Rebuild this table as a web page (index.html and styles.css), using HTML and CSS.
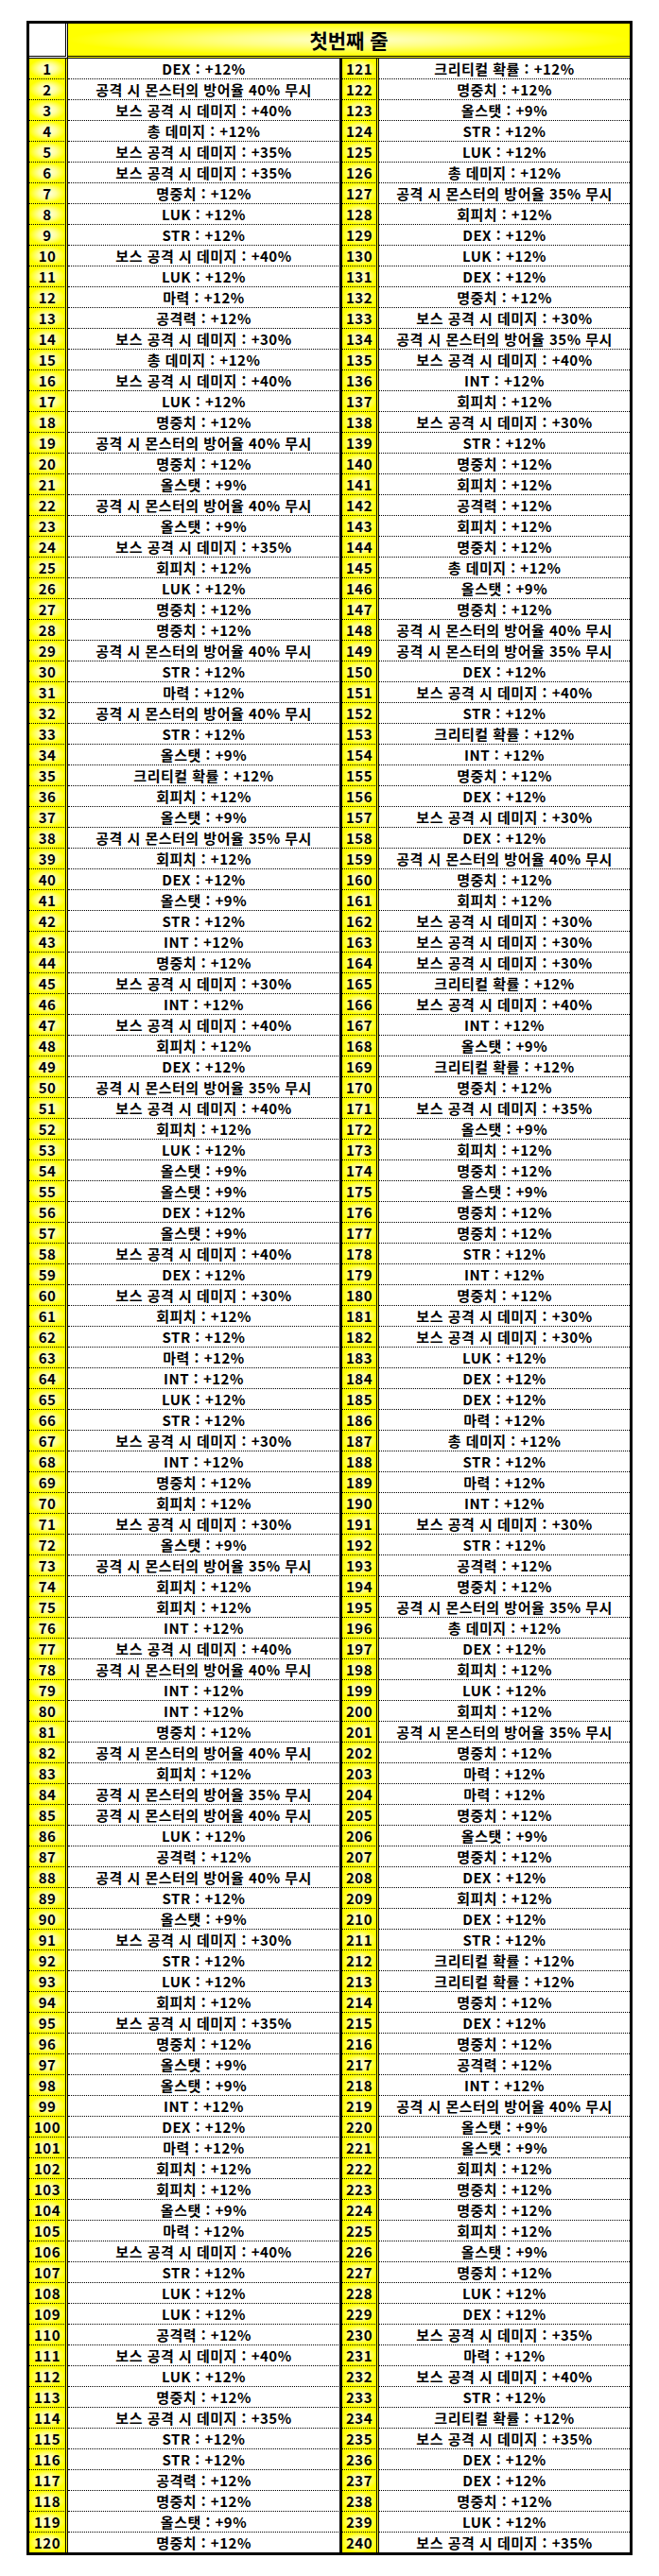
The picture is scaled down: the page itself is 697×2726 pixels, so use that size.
FILE: index.html
```html
<!DOCTYPE html>
<html lang="ko">
<head>
<meta charset="utf-8">
<title>첫번째 줄</title>
<link rel="stylesheet" href="styles.css">
</head>
<body>
<div class="page">
<div class="sheet">
<div class="head"><div class="corner"></div><div class="title">첫번째 줄</div></div>
<div class="row"><span class="n">1</span><span class="t">DEX : +12%</span><span class="n n2">121</span><span class="t t2">크리티컬 확률 : +12%</span></div>
<div class="row"><span class="n">2</span><span class="t">공격 시 몬스터의 방어율 40% 무시</span><span class="n n2">122</span><span class="t t2">명중치 : +12%</span></div>
<div class="row"><span class="n">3</span><span class="t">보스 공격 시 데미지 : +40%</span><span class="n n2">123</span><span class="t t2">올스탯 : +9%</span></div>
<div class="row"><span class="n">4</span><span class="t">총 데미지 : +12%</span><span class="n n2">124</span><span class="t t2">STR : +12%</span></div>
<div class="row"><span class="n">5</span><span class="t">보스 공격 시 데미지 : +35%</span><span class="n n2">125</span><span class="t t2">LUK : +12%</span></div>
<div class="row"><span class="n">6</span><span class="t">보스 공격 시 데미지 : +35%</span><span class="n n2">126</span><span class="t t2">총 데미지 : +12%</span></div>
<div class="row"><span class="n">7</span><span class="t">명중치 : +12%</span><span class="n n2">127</span><span class="t t2">공격 시 몬스터의 방어율 35% 무시</span></div>
<div class="row"><span class="n">8</span><span class="t">LUK : +12%</span><span class="n n2">128</span><span class="t t2">회피치 : +12%</span></div>
<div class="row"><span class="n">9</span><span class="t">STR : +12%</span><span class="n n2">129</span><span class="t t2">DEX : +12%</span></div>
<div class="row"><span class="n">10</span><span class="t">보스 공격 시 데미지 : +40%</span><span class="n n2">130</span><span class="t t2">LUK : +12%</span></div>
<div class="row"><span class="n">11</span><span class="t">LUK : +12%</span><span class="n n2">131</span><span class="t t2">DEX : +12%</span></div>
<div class="row"><span class="n">12</span><span class="t">마력 : +12%</span><span class="n n2">132</span><span class="t t2">명중치 : +12%</span></div>
<div class="row"><span class="n">13</span><span class="t">공격력 : +12%</span><span class="n n2">133</span><span class="t t2">보스 공격 시 데미지 : +30%</span></div>
<div class="row"><span class="n">14</span><span class="t">보스 공격 시 데미지 : +30%</span><span class="n n2">134</span><span class="t t2">공격 시 몬스터의 방어율 35% 무시</span></div>
<div class="row"><span class="n">15</span><span class="t">총 데미지 : +12%</span><span class="n n2">135</span><span class="t t2">보스 공격 시 데미지 : +40%</span></div>
<div class="row"><span class="n">16</span><span class="t">보스 공격 시 데미지 : +40%</span><span class="n n2">136</span><span class="t t2">INT : +12%</span></div>
<div class="row"><span class="n">17</span><span class="t">LUK : +12%</span><span class="n n2">137</span><span class="t t2">회피치 : +12%</span></div>
<div class="row"><span class="n">18</span><span class="t">명중치 : +12%</span><span class="n n2">138</span><span class="t t2">보스 공격 시 데미지 : +30%</span></div>
<div class="row"><span class="n">19</span><span class="t">공격 시 몬스터의 방어율 40% 무시</span><span class="n n2">139</span><span class="t t2">STR : +12%</span></div>
<div class="row"><span class="n">20</span><span class="t">명중치 : +12%</span><span class="n n2">140</span><span class="t t2">명중치 : +12%</span></div>
<div class="row"><span class="n">21</span><span class="t">올스탯 : +9%</span><span class="n n2">141</span><span class="t t2">회피치 : +12%</span></div>
<div class="row"><span class="n">22</span><span class="t">공격 시 몬스터의 방어율 40% 무시</span><span class="n n2">142</span><span class="t t2">공격력 : +12%</span></div>
<div class="row"><span class="n">23</span><span class="t">올스탯 : +9%</span><span class="n n2">143</span><span class="t t2">회피치 : +12%</span></div>
<div class="row"><span class="n">24</span><span class="t">보스 공격 시 데미지 : +35%</span><span class="n n2">144</span><span class="t t2">명중치 : +12%</span></div>
<div class="row"><span class="n">25</span><span class="t">회피치 : +12%</span><span class="n n2">145</span><span class="t t2">총 데미지 : +12%</span></div>
<div class="row"><span class="n">26</span><span class="t">LUK : +12%</span><span class="n n2">146</span><span class="t t2">올스탯 : +9%</span></div>
<div class="row"><span class="n">27</span><span class="t">명중치 : +12%</span><span class="n n2">147</span><span class="t t2">명중치 : +12%</span></div>
<div class="row"><span class="n">28</span><span class="t">명중치 : +12%</span><span class="n n2">148</span><span class="t t2">공격 시 몬스터의 방어율 40% 무시</span></div>
<div class="row"><span class="n">29</span><span class="t">공격 시 몬스터의 방어율 40% 무시</span><span class="n n2">149</span><span class="t t2">공격 시 몬스터의 방어율 35% 무시</span></div>
<div class="row"><span class="n">30</span><span class="t">STR : +12%</span><span class="n n2">150</span><span class="t t2">DEX : +12%</span></div>
<div class="row"><span class="n">31</span><span class="t">마력 : +12%</span><span class="n n2">151</span><span class="t t2">보스 공격 시 데미지 : +40%</span></div>
<div class="row"><span class="n">32</span><span class="t">공격 시 몬스터의 방어율 40% 무시</span><span class="n n2">152</span><span class="t t2">STR : +12%</span></div>
<div class="row"><span class="n">33</span><span class="t">STR : +12%</span><span class="n n2">153</span><span class="t t2">크리티컬 확률 : +12%</span></div>
<div class="row"><span class="n">34</span><span class="t">올스탯 : +9%</span><span class="n n2">154</span><span class="t t2">INT : +12%</span></div>
<div class="row"><span class="n">35</span><span class="t">크리티컬 확률 : +12%</span><span class="n n2">155</span><span class="t t2">명중치 : +12%</span></div>
<div class="row"><span class="n">36</span><span class="t">회피치 : +12%</span><span class="n n2">156</span><span class="t t2">DEX : +12%</span></div>
<div class="row"><span class="n">37</span><span class="t">올스탯 : +9%</span><span class="n n2">157</span><span class="t t2">보스 공격 시 데미지 : +30%</span></div>
<div class="row"><span class="n">38</span><span class="t">공격 시 몬스터의 방어율 35% 무시</span><span class="n n2">158</span><span class="t t2">DEX : +12%</span></div>
<div class="row"><span class="n">39</span><span class="t">회피치 : +12%</span><span class="n n2">159</span><span class="t t2">공격 시 몬스터의 방어율 40% 무시</span></div>
<div class="row"><span class="n">40</span><span class="t">DEX : +12%</span><span class="n n2">160</span><span class="t t2">명중치 : +12%</span></div>
<div class="row"><span class="n">41</span><span class="t">올스탯 : +9%</span><span class="n n2">161</span><span class="t t2">회피치 : +12%</span></div>
<div class="row"><span class="n">42</span><span class="t">STR : +12%</span><span class="n n2">162</span><span class="t t2">보스 공격 시 데미지 : +30%</span></div>
<div class="row"><span class="n">43</span><span class="t">INT : +12%</span><span class="n n2">163</span><span class="t t2">보스 공격 시 데미지 : +30%</span></div>
<div class="row"><span class="n">44</span><span class="t">명중치 : +12%</span><span class="n n2">164</span><span class="t t2">보스 공격 시 데미지 : +30%</span></div>
<div class="row"><span class="n">45</span><span class="t">보스 공격 시 데미지 : +30%</span><span class="n n2">165</span><span class="t t2">크리티컬 확률 : +12%</span></div>
<div class="row"><span class="n">46</span><span class="t">INT : +12%</span><span class="n n2">166</span><span class="t t2">보스 공격 시 데미지 : +40%</span></div>
<div class="row"><span class="n">47</span><span class="t">보스 공격 시 데미지 : +40%</span><span class="n n2">167</span><span class="t t2">INT : +12%</span></div>
<div class="row"><span class="n">48</span><span class="t">회피치 : +12%</span><span class="n n2">168</span><span class="t t2">올스탯 : +9%</span></div>
<div class="row"><span class="n">49</span><span class="t">DEX : +12%</span><span class="n n2">169</span><span class="t t2">크리티컬 확률 : +12%</span></div>
<div class="row"><span class="n">50</span><span class="t">공격 시 몬스터의 방어율 35% 무시</span><span class="n n2">170</span><span class="t t2">명중치 : +12%</span></div>
<div class="row"><span class="n">51</span><span class="t">보스 공격 시 데미지 : +40%</span><span class="n n2">171</span><span class="t t2">보스 공격 시 데미지 : +35%</span></div>
<div class="row"><span class="n">52</span><span class="t">회피치 : +12%</span><span class="n n2">172</span><span class="t t2">올스탯 : +9%</span></div>
<div class="row"><span class="n">53</span><span class="t">LUK : +12%</span><span class="n n2">173</span><span class="t t2">회피치 : +12%</span></div>
<div class="row"><span class="n">54</span><span class="t">올스탯 : +9%</span><span class="n n2">174</span><span class="t t2">명중치 : +12%</span></div>
<div class="row"><span class="n">55</span><span class="t">올스탯 : +9%</span><span class="n n2">175</span><span class="t t2">올스탯 : +9%</span></div>
<div class="row"><span class="n">56</span><span class="t">DEX : +12%</span><span class="n n2">176</span><span class="t t2">명중치 : +12%</span></div>
<div class="row"><span class="n">57</span><span class="t">올스탯 : +9%</span><span class="n n2">177</span><span class="t t2">명중치 : +12%</span></div>
<div class="row"><span class="n">58</span><span class="t">보스 공격 시 데미지 : +40%</span><span class="n n2">178</span><span class="t t2">STR : +12%</span></div>
<div class="row"><span class="n">59</span><span class="t">DEX : +12%</span><span class="n n2">179</span><span class="t t2">INT : +12%</span></div>
<div class="row"><span class="n">60</span><span class="t">보스 공격 시 데미지 : +30%</span><span class="n n2">180</span><span class="t t2">명중치 : +12%</span></div>
<div class="row"><span class="n">61</span><span class="t">회피치 : +12%</span><span class="n n2">181</span><span class="t t2">보스 공격 시 데미지 : +30%</span></div>
<div class="row"><span class="n">62</span><span class="t">STR : +12%</span><span class="n n2">182</span><span class="t t2">보스 공격 시 데미지 : +30%</span></div>
<div class="row"><span class="n">63</span><span class="t">마력 : +12%</span><span class="n n2">183</span><span class="t t2">LUK : +12%</span></div>
<div class="row"><span class="n">64</span><span class="t">INT : +12%</span><span class="n n2">184</span><span class="t t2">DEX : +12%</span></div>
<div class="row"><span class="n">65</span><span class="t">LUK : +12%</span><span class="n n2">185</span><span class="t t2">DEX : +12%</span></div>
<div class="row"><span class="n">66</span><span class="t">STR : +12%</span><span class="n n2">186</span><span class="t t2">마력 : +12%</span></div>
<div class="row"><span class="n">67</span><span class="t">보스 공격 시 데미지 : +30%</span><span class="n n2">187</span><span class="t t2">총 데미지 : +12%</span></div>
<div class="row"><span class="n">68</span><span class="t">INT : +12%</span><span class="n n2">188</span><span class="t t2">STR : +12%</span></div>
<div class="row"><span class="n">69</span><span class="t">명중치 : +12%</span><span class="n n2">189</span><span class="t t2">마력 : +12%</span></div>
<div class="row"><span class="n">70</span><span class="t">회피치 : +12%</span><span class="n n2">190</span><span class="t t2">INT : +12%</span></div>
<div class="row"><span class="n">71</span><span class="t">보스 공격 시 데미지 : +30%</span><span class="n n2">191</span><span class="t t2">보스 공격 시 데미지 : +30%</span></div>
<div class="row"><span class="n">72</span><span class="t">올스탯 : +9%</span><span class="n n2">192</span><span class="t t2">STR : +12%</span></div>
<div class="row"><span class="n">73</span><span class="t">공격 시 몬스터의 방어율 35% 무시</span><span class="n n2">193</span><span class="t t2">공격력 : +12%</span></div>
<div class="row"><span class="n">74</span><span class="t">회피치 : +12%</span><span class="n n2">194</span><span class="t t2">명중치 : +12%</span></div>
<div class="row"><span class="n">75</span><span class="t">회피치 : +12%</span><span class="n n2">195</span><span class="t t2">공격 시 몬스터의 방어율 35% 무시</span></div>
<div class="row"><span class="n">76</span><span class="t">INT : +12%</span><span class="n n2">196</span><span class="t t2">총 데미지 : +12%</span></div>
<div class="row"><span class="n">77</span><span class="t">보스 공격 시 데미지 : +40%</span><span class="n n2">197</span><span class="t t2">DEX : +12%</span></div>
<div class="row"><span class="n">78</span><span class="t">공격 시 몬스터의 방어율 40% 무시</span><span class="n n2">198</span><span class="t t2">회피치 : +12%</span></div>
<div class="row"><span class="n">79</span><span class="t">INT : +12%</span><span class="n n2">199</span><span class="t t2">LUK : +12%</span></div>
<div class="row"><span class="n">80</span><span class="t">INT : +12%</span><span class="n n2">200</span><span class="t t2">회피치 : +12%</span></div>
<div class="row"><span class="n">81</span><span class="t">명중치 : +12%</span><span class="n n2">201</span><span class="t t2">공격 시 몬스터의 방어율 35% 무시</span></div>
<div class="row"><span class="n">82</span><span class="t">공격 시 몬스터의 방어율 40% 무시</span><span class="n n2">202</span><span class="t t2">명중치 : +12%</span></div>
<div class="row"><span class="n">83</span><span class="t">회피치 : +12%</span><span class="n n2">203</span><span class="t t2">마력 : +12%</span></div>
<div class="row"><span class="n">84</span><span class="t">공격 시 몬스터의 방어율 35% 무시</span><span class="n n2">204</span><span class="t t2">마력 : +12%</span></div>
<div class="row"><span class="n">85</span><span class="t">공격 시 몬스터의 방어율 40% 무시</span><span class="n n2">205</span><span class="t t2">명중치 : +12%</span></div>
<div class="row"><span class="n">86</span><span class="t">LUK : +12%</span><span class="n n2">206</span><span class="t t2">올스탯 : +9%</span></div>
<div class="row"><span class="n">87</span><span class="t">공격력 : +12%</span><span class="n n2">207</span><span class="t t2">명중치 : +12%</span></div>
<div class="row"><span class="n">88</span><span class="t">공격 시 몬스터의 방어율 40% 무시</span><span class="n n2">208</span><span class="t t2">DEX : +12%</span></div>
<div class="row"><span class="n">89</span><span class="t">STR : +12%</span><span class="n n2">209</span><span class="t t2">회피치 : +12%</span></div>
<div class="row"><span class="n">90</span><span class="t">올스탯 : +9%</span><span class="n n2">210</span><span class="t t2">DEX : +12%</span></div>
<div class="row"><span class="n">91</span><span class="t">보스 공격 시 데미지 : +30%</span><span class="n n2">211</span><span class="t t2">STR : +12%</span></div>
<div class="row"><span class="n">92</span><span class="t">STR : +12%</span><span class="n n2">212</span><span class="t t2">크리티컬 확률 : +12%</span></div>
<div class="row"><span class="n">93</span><span class="t">LUK : +12%</span><span class="n n2">213</span><span class="t t2">크리티컬 확률 : +12%</span></div>
<div class="row"><span class="n">94</span><span class="t">회피치 : +12%</span><span class="n n2">214</span><span class="t t2">명중치 : +12%</span></div>
<div class="row"><span class="n">95</span><span class="t">보스 공격 시 데미지 : +35%</span><span class="n n2">215</span><span class="t t2">DEX : +12%</span></div>
<div class="row"><span class="n">96</span><span class="t">명중치 : +12%</span><span class="n n2">216</span><span class="t t2">명중치 : +12%</span></div>
<div class="row"><span class="n">97</span><span class="t">올스탯 : +9%</span><span class="n n2">217</span><span class="t t2">공격력 : +12%</span></div>
<div class="row"><span class="n">98</span><span class="t">올스탯 : +9%</span><span class="n n2">218</span><span class="t t2">INT : +12%</span></div>
<div class="row"><span class="n">99</span><span class="t">INT : +12%</span><span class="n n2">219</span><span class="t t2">공격 시 몬스터의 방어율 40% 무시</span></div>
<div class="row"><span class="n">100</span><span class="t">DEX : +12%</span><span class="n n2">220</span><span class="t t2">올스탯 : +9%</span></div>
<div class="row"><span class="n">101</span><span class="t">마력 : +12%</span><span class="n n2">221</span><span class="t t2">올스탯 : +9%</span></div>
<div class="row"><span class="n">102</span><span class="t">회피치 : +12%</span><span class="n n2">222</span><span class="t t2">회피치 : +12%</span></div>
<div class="row"><span class="n">103</span><span class="t">회피치 : +12%</span><span class="n n2">223</span><span class="t t2">명중치 : +12%</span></div>
<div class="row"><span class="n">104</span><span class="t">올스탯 : +9%</span><span class="n n2">224</span><span class="t t2">명중치 : +12%</span></div>
<div class="row"><span class="n">105</span><span class="t">마력 : +12%</span><span class="n n2">225</span><span class="t t2">회피치 : +12%</span></div>
<div class="row"><span class="n">106</span><span class="t">보스 공격 시 데미지 : +40%</span><span class="n n2">226</span><span class="t t2">올스탯 : +9%</span></div>
<div class="row"><span class="n">107</span><span class="t">STR : +12%</span><span class="n n2">227</span><span class="t t2">명중치 : +12%</span></div>
<div class="row"><span class="n">108</span><span class="t">LUK : +12%</span><span class="n n2">228</span><span class="t t2">LUK : +12%</span></div>
<div class="row"><span class="n">109</span><span class="t">LUK : +12%</span><span class="n n2">229</span><span class="t t2">DEX : +12%</span></div>
<div class="row"><span class="n">110</span><span class="t">공격력 : +12%</span><span class="n n2">230</span><span class="t t2">보스 공격 시 데미지 : +35%</span></div>
<div class="row"><span class="n">111</span><span class="t">보스 공격 시 데미지 : +40%</span><span class="n n2">231</span><span class="t t2">마력 : +12%</span></div>
<div class="row"><span class="n">112</span><span class="t">LUK : +12%</span><span class="n n2">232</span><span class="t t2">보스 공격 시 데미지 : +40%</span></div>
<div class="row"><span class="n">113</span><span class="t">명중치 : +12%</span><span class="n n2">233</span><span class="t t2">STR : +12%</span></div>
<div class="row"><span class="n">114</span><span class="t">보스 공격 시 데미지 : +35%</span><span class="n n2">234</span><span class="t t2">크리티컬 확률 : +12%</span></div>
<div class="row"><span class="n">115</span><span class="t">STR : +12%</span><span class="n n2">235</span><span class="t t2">보스 공격 시 데미지 : +35%</span></div>
<div class="row"><span class="n">116</span><span class="t">STR : +12%</span><span class="n n2">236</span><span class="t t2">DEX : +12%</span></div>
<div class="row"><span class="n">117</span><span class="t">공격력 : +12%</span><span class="n n2">237</span><span class="t t2">DEX : +12%</span></div>
<div class="row"><span class="n">118</span><span class="t">명중치 : +12%</span><span class="n n2">238</span><span class="t t2">명중치 : +12%</span></div>
<div class="row"><span class="n">119</span><span class="t">올스탯 : +9%</span><span class="n n2">239</span><span class="t t2">LUK : +12%</span></div>
<div class="row"><span class="n">120</span><span class="t">명중치 : +12%</span><span class="n n2">240</span><span class="t t2">보스 공격 시 데미지 : +35%</span></div>
</div>
</div>
</body>
</html>
```

FILE: styles.css
```css
body {
  margin: 0;
  background: #ffffff;
  font-family: "Noto Sans CJK KR", "Noto Sans", sans-serif;
  color: #000000;
}

.page {
  padding: 22px 0 22px 28px;
}

.sheet {
  width: 641px;
  box-sizing: border-box;
  border: 3px solid #000000;
}

.head {
  display: flex;
  height: 37px;
}

.corner {
  width: 41px;
  box-sizing: border-box;
  background: #ffffff;
  border-right: 3px double #000000;
  border-bottom: 3px double #000000;
}

.title {
  flex: 1;
  box-sizing: border-box;
  border-bottom: 3px double #000000;
  background: radial-gradient(farthest-side at 50% 50%, #ffffd0 0%, #ffff80 45%, #ffff00 100%);
  font-size: 21px;
  font-weight: 700;
  line-height: 34px;
  text-align: center;
}

.row {
  display: flex;
  height: 22px;
}

.row > span {
  display: block;
  box-sizing: border-box;
  height: 22px;
  border-bottom: 1px dotted #000000;
  line-height: 21px;
  font-size: 15px;
  font-weight: 700;
  letter-spacing: 0.5px;
  text-align: center;
  white-space: nowrap;
  overflow: hidden;
}

.row:last-child {
  height: 21px;
}

.row:last-child > span {
  height: 21px;
  border-bottom: none;
}

.n {
  width: 41px;
  border-right: 3px double #000000;
  background: radial-gradient(farthest-side at 50% 50%, #fffff2 0%, #ffff9a 50%, #ffff00 100%);
}

.n2 {
  width: 39px;
}

.t {
  width: 290px;
  border-right: 3px solid #000000;
  background: #ffffff;
}

.t2 {
  width: 265px;
  border-right: none;
}
```
